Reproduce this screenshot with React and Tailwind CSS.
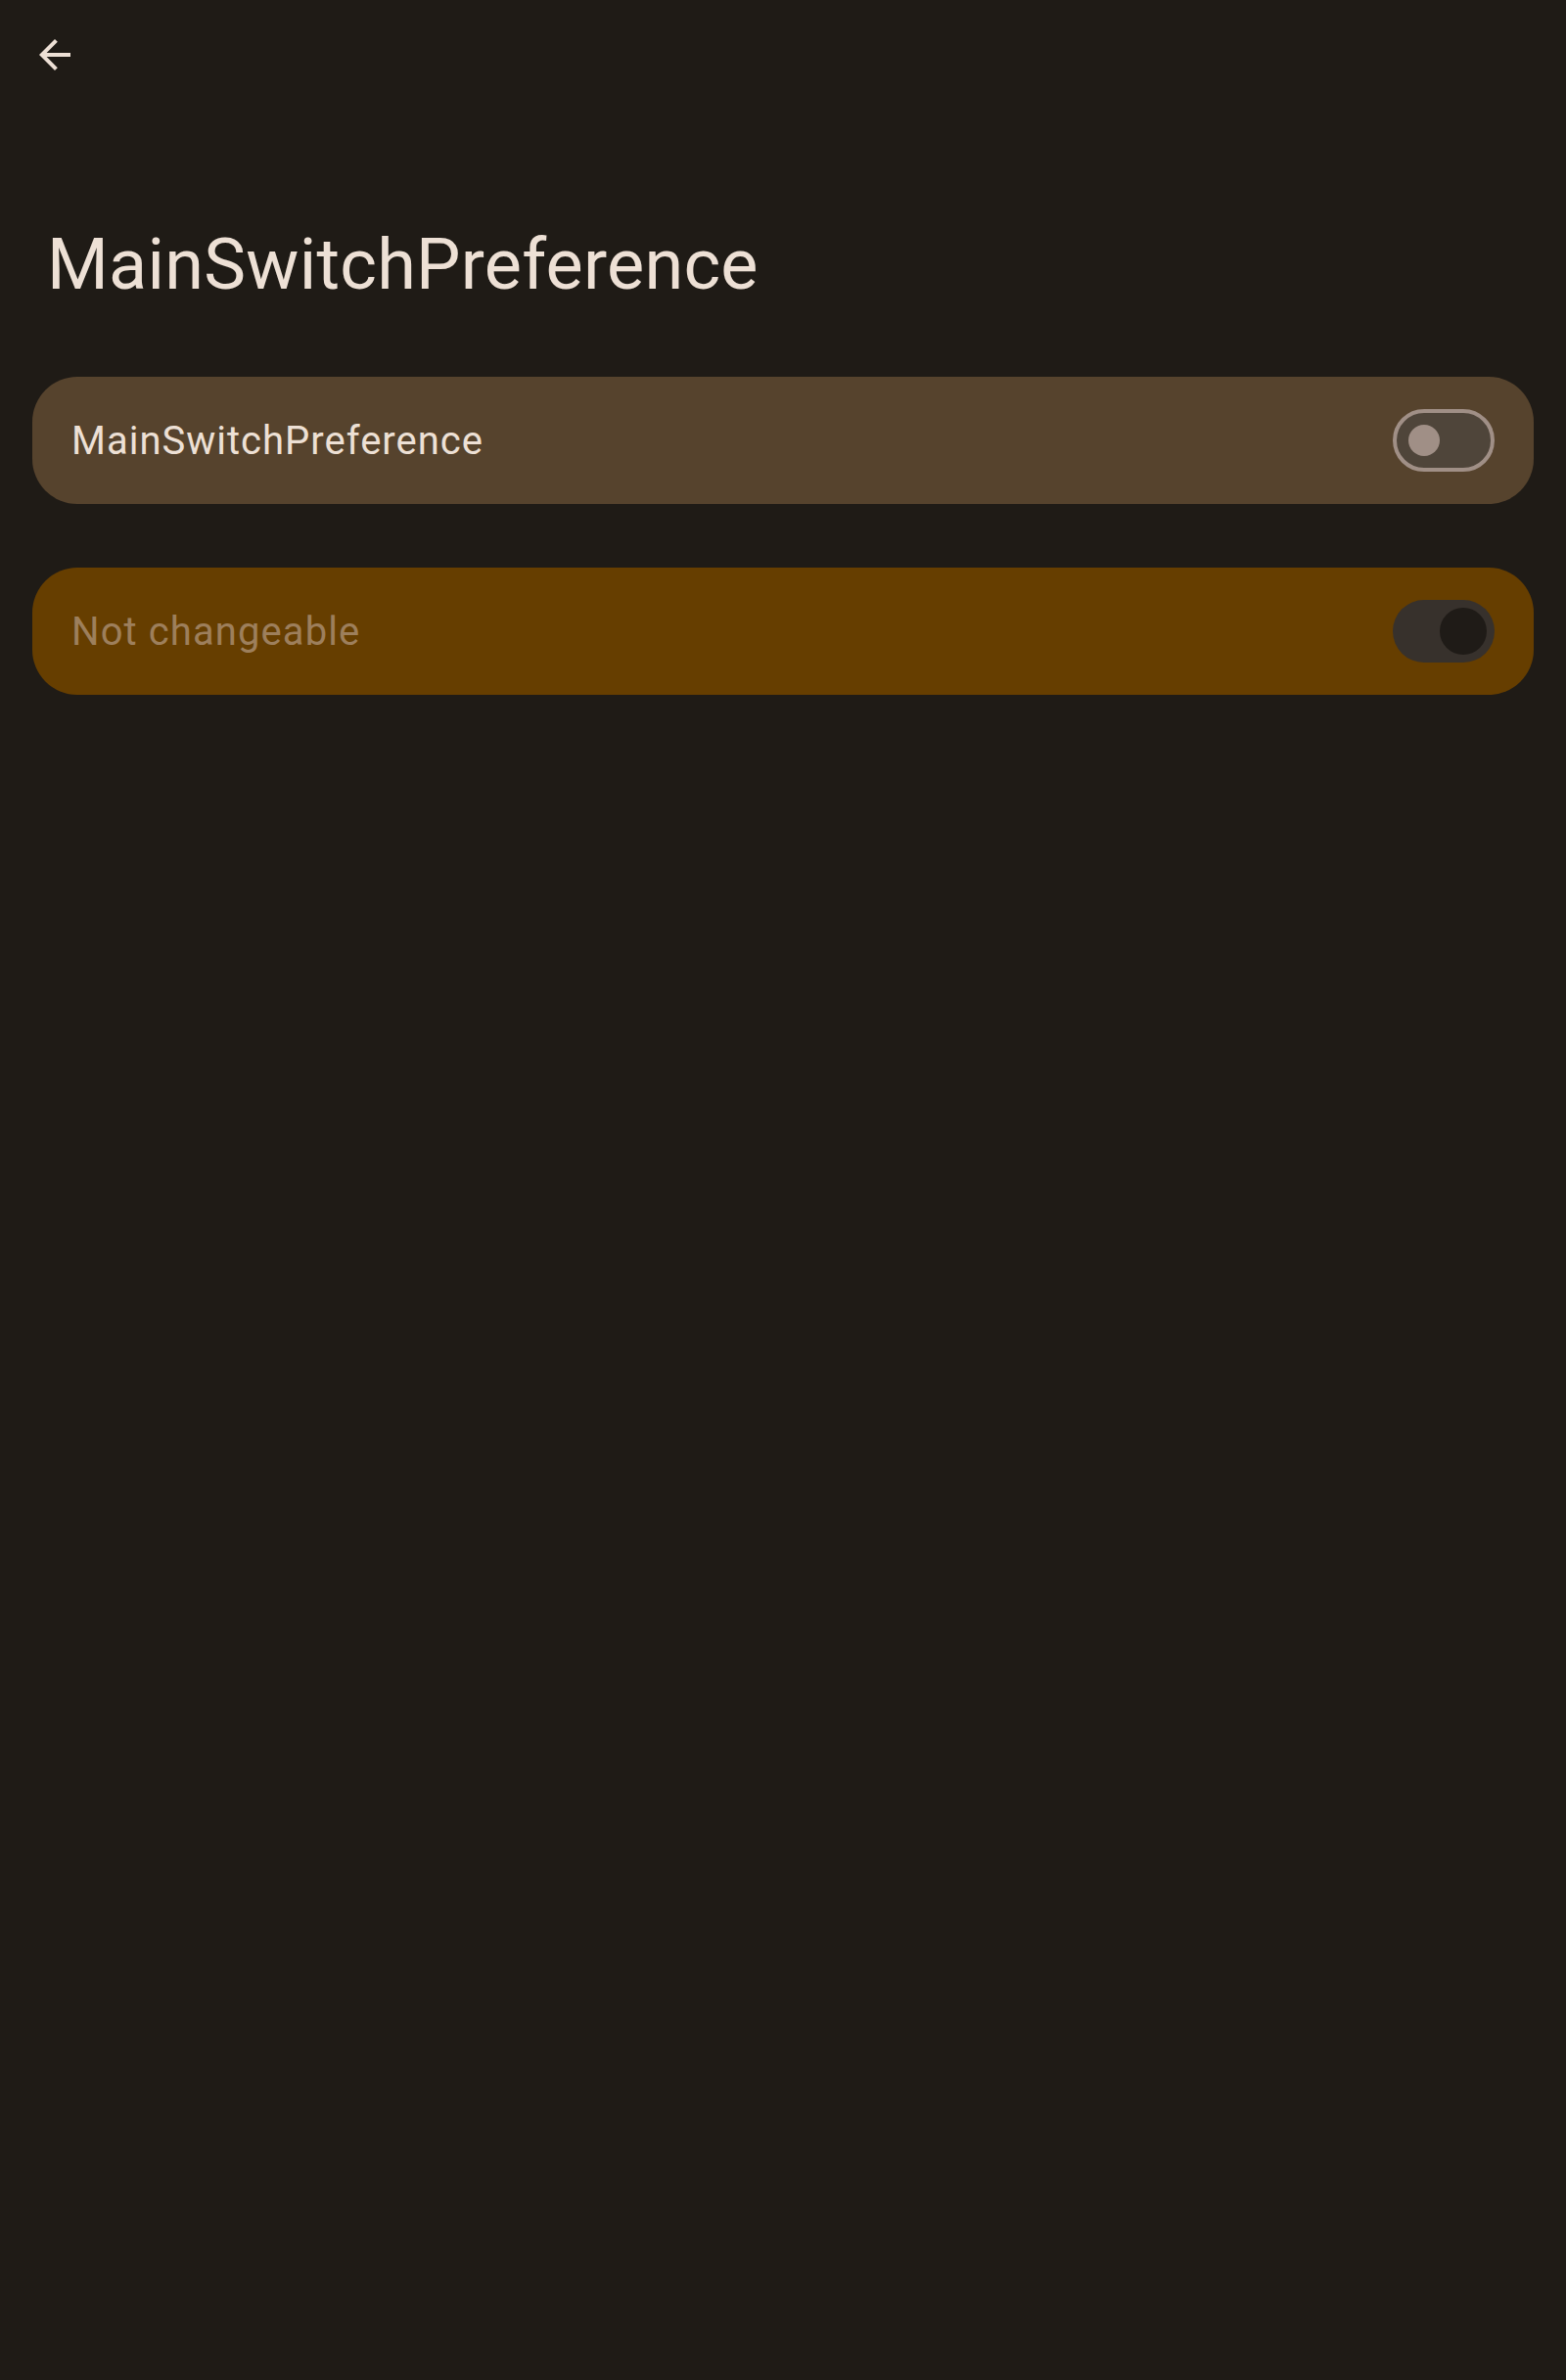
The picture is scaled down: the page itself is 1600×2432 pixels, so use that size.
export default function App() {
    const font = { fontFamily: '"Roboto", "Liberation Sans", sans-serif' };

    return (
        <div className="min-h-[2432px] w-full bg-[#1f1b16] text-[#ede0d5]" style={font}>
            {/* Top bar */}
            <div className="pt-8 pl-8">
                <button className="w-12 h-12 flex items-center justify-center">
                    <svg width="48" height="48" viewBox="0 0 24 24" fill="#ede0d5">
                        <path d="M20 11H7.83l5.59-5.59L12 4l-8 8 8 8 1.41-1.41L7.83 13H20v-2z" />
                    </svg>
                </button>
            </div>

            {/* Title */}
            <h1 className="mt-[155px] pl-[48px] text-[72px] leading-[72px] font-normal tracking-[0.25px]">
                MainSwitchPreference
            </h1>

            {/* Switch bars */}
            <div className="mt-[78px] px-[33px] flex flex-col gap-[65px]">
                <div className="h-[130px] rounded-[46px] bg-[#56432d] flex items-center justify-between pl-[40px] pr-[40px]">
                    <span className="pt-[2px] text-[40px] leading-[48px] tracking-[1px] text-[#ede0d5]">MainSwitchPreference</span>
                    <div className="w-[104px] h-[64px] rounded-full border-4 border-[#a08f86] bg-[#4f453a] flex items-center pl-3">
                        <div className="w-8 h-8 rounded-full bg-[#a08f86]" />
                    </div>
                </div>

                <div className="h-[130px] rounded-[46px] bg-[#663e00] flex items-center justify-between pl-[40px] pr-[40px]">
                    <span className="pt-[2px] text-[40px] leading-[48px] tracking-[1.1px] text-[#9d7f5c]">Not changeable</span>
                    <div className="w-[104px] h-[64px] rounded-full bg-[#37312c] flex items-center justify-end pr-2">
                        <div className="w-12 h-12 rounded-full bg-[#1f1b17]" />
                    </div>
                </div>
            </div>
        </div>
    );
}
